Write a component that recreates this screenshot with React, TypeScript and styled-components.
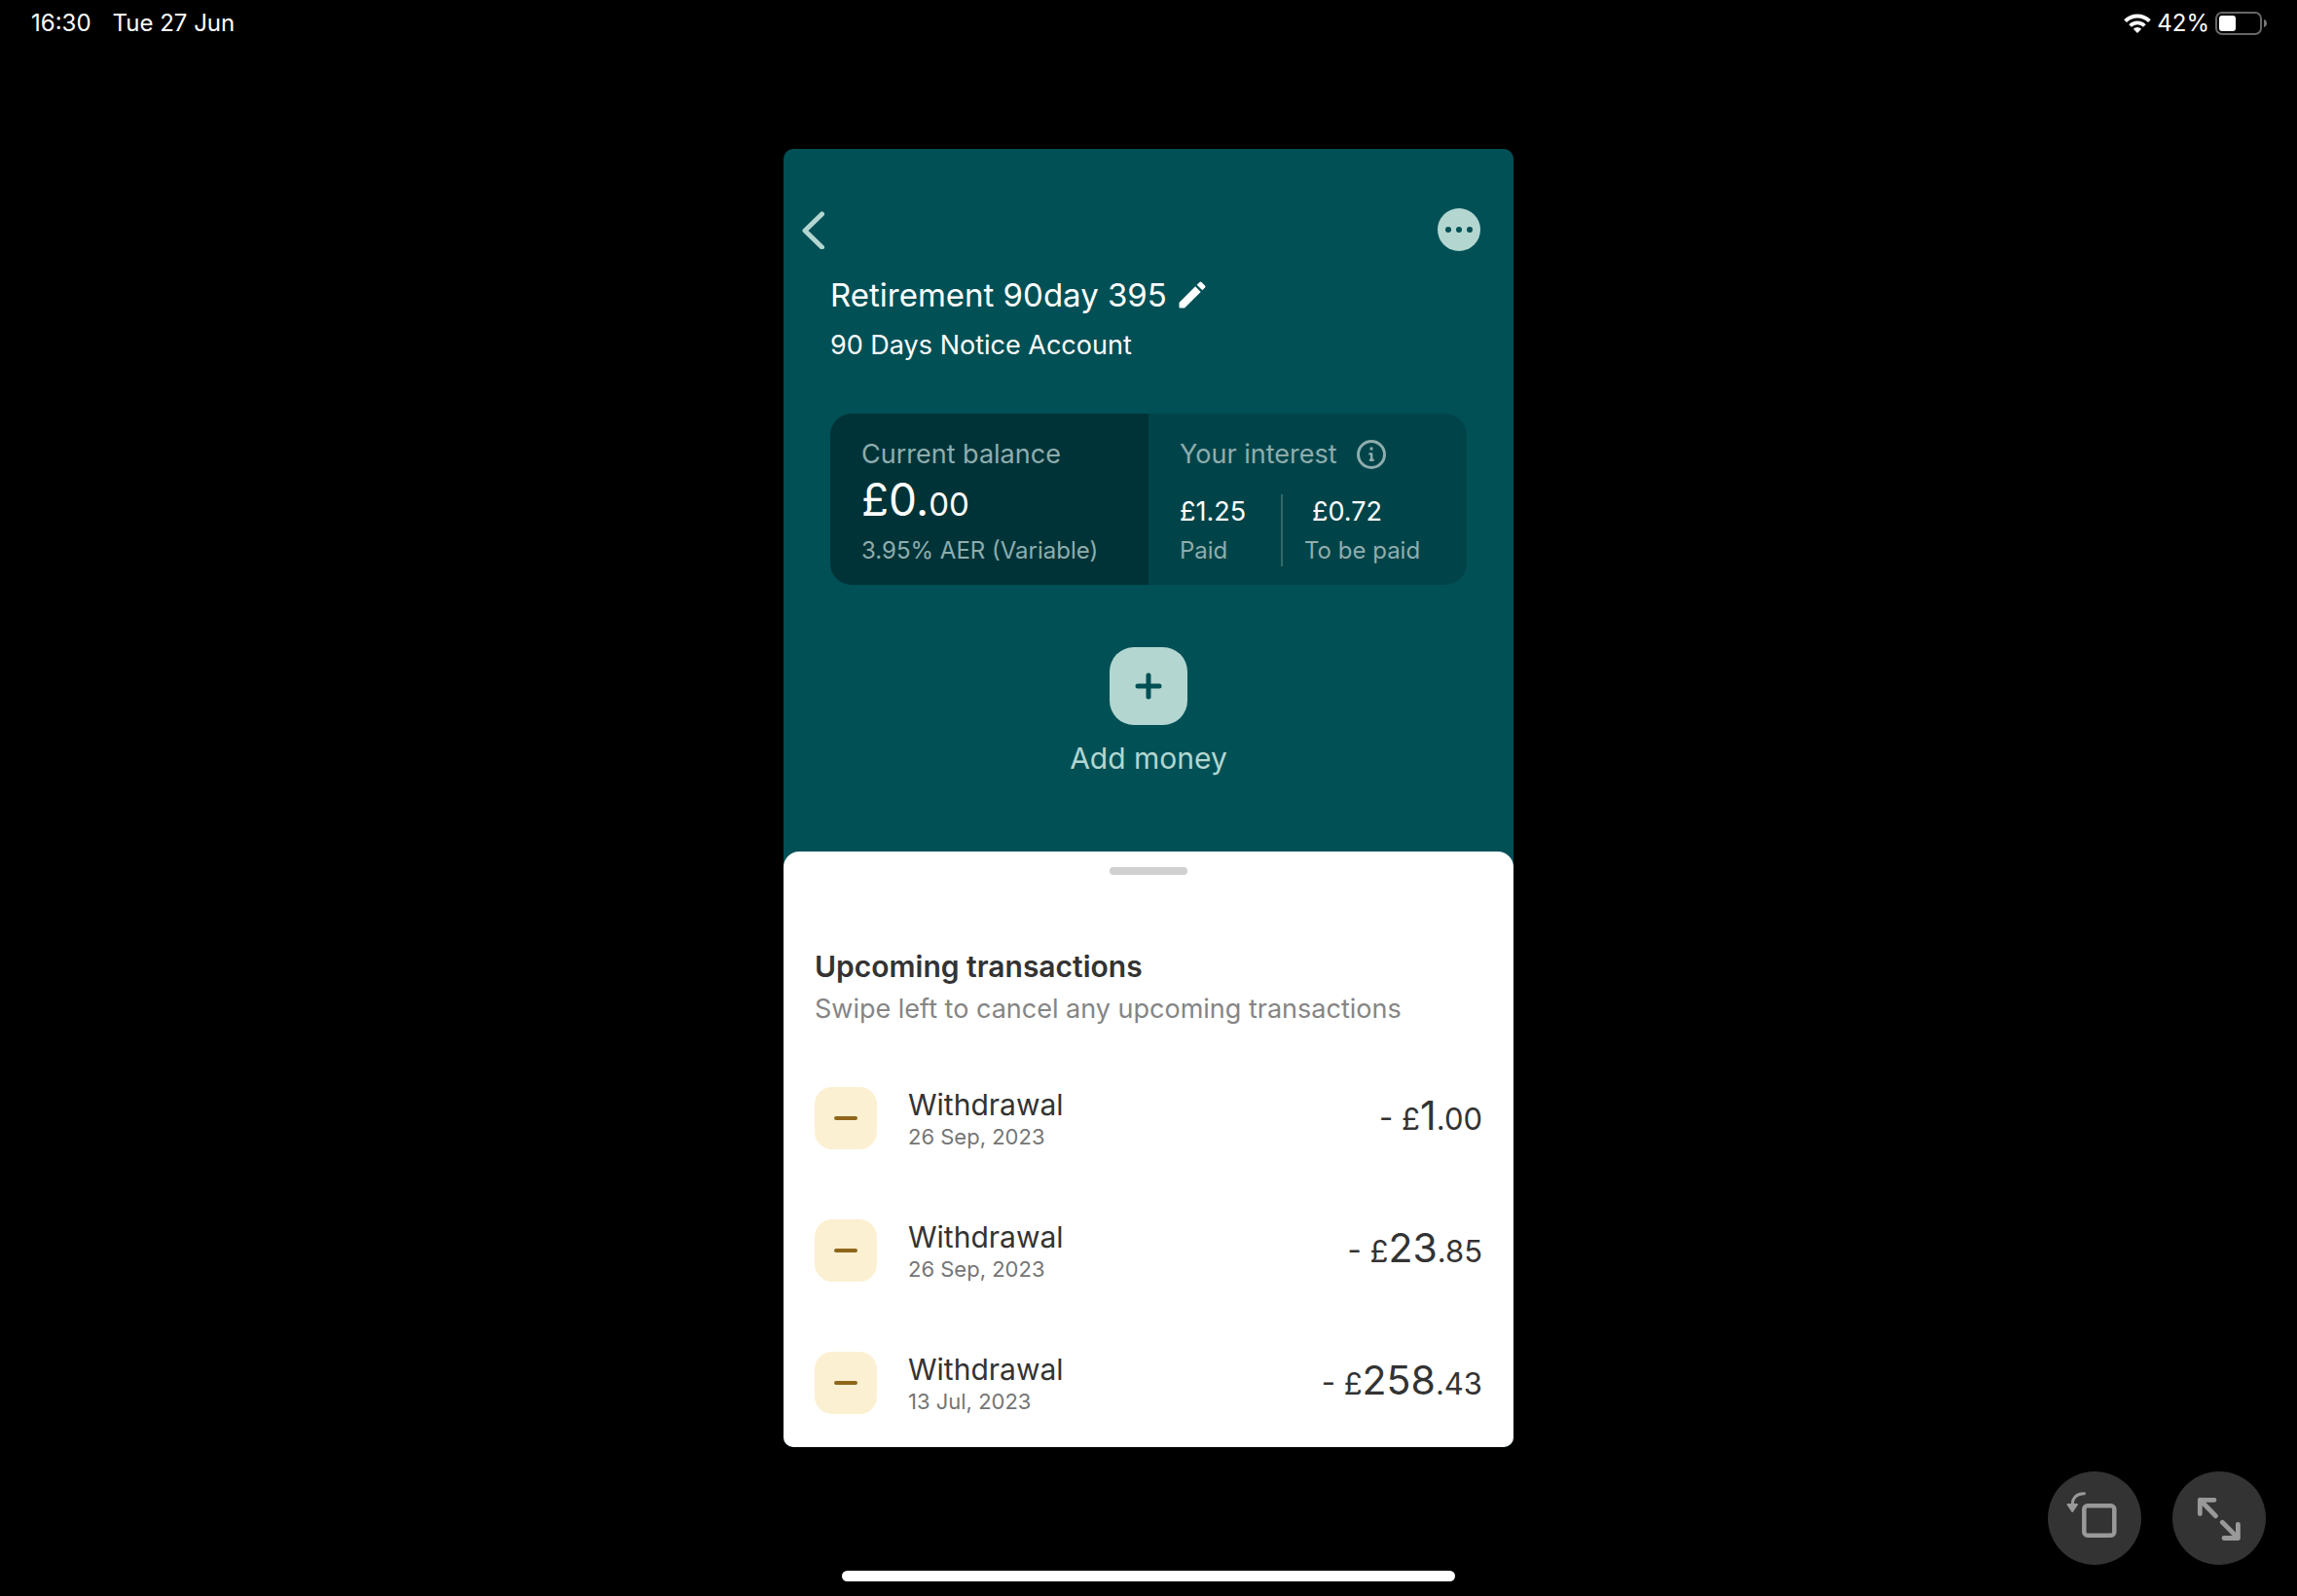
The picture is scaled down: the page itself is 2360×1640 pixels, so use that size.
import React from "react";
import styled, { createGlobalStyle } from "styled-components";

const teal = "#005056";
const mint = "#b3d6d0";
const muted = "#8fadae";
const ink = "#333333";

const GlobalStyle = createGlobalStyle`
  *, *::before, *::after { box-sizing: border-box; }
  body {
    margin: 0;
    background: #000;
    font-family: Inter, "Liberation Sans", sans-serif;
    font-weight: 400;
  }
  h1, h2, p, ul, dl, dd, dt { margin: 0; padding: 0; font-weight: 400; }
  ul { list-style: none; }
  button {
    border: 0;
    padding: 0;
    background: none;
    font: inherit;
    color: inherit;
    cursor: pointer;
  }
  svg { display: block; }
`;

const Page = styled.div`
  min-height: 100vh;
  display: flex;
  flex-direction: column;
  background: #000;
`;

const StatusBar = styled.header`
  display: flex;
  align-items: center;
  justify-content: space-between;
  height: 48px;
  padding: 0 30px 0 32px;
  color: #fff;
  font-size: 24px;
  line-height: 28px;
`;

const StatusGroup = styled.div<{ $gap: number }>`
  display: flex;
  align-items: center;
  gap: ${(p) => p.$gap}px;
`;

const Phone = styled.main`
  width: 100%;
  max-width: 750px;
  margin: 105px auto 25px;
  border-radius: 10px;
  overflow: hidden;
  background: ${teal};
`;

const TopBar = styled.nav`
  display: flex;
  align-items: center;
  justify-content: space-between;
  padding: 61px 34px 25px 14px;
`;

const MoreButton = styled.button`
  display: grid;
  place-items: center;
  width: 44px;
  height: 44px;
  border-radius: 50%;
  background: ${mint};
  color: ${teal};
`;

const AccountHeading = styled.section`
  display: flex;
  flex-direction: column;
  gap: 14px;
  padding: 0 48px 52px;
  color: #fff;
`;

const TitleLine = styled.div`
  display: flex;
  align-items: center;
  gap: 8px;
  height: 40px;
`;

const Title = styled.h1`
  font-size: 33px;
  line-height: 40px;
`;

const Subtitle = styled.p`
  font-size: 27px;
  line-height: 36px;
`;

const Summary = styled.section`
  display: grid;
  grid-template-columns: 1fr 1fr;
  margin: 0 48px 64px;
  border-radius: 22px;
  overflow: hidden;
  color: #fff;
`;

const SummaryPane = styled.div<{ $tone: string }>`
  padding: 24px 0 19px 32px;
  background: ${(p) => p.$tone};
`;

const PaneLabel = styled.h2`
  display: flex;
  align-items: center;
  gap: 20px;
  height: 36px;
  font-size: 27px;
  line-height: 36px;
  color: ${muted};
`;

const Balance = styled.p`
  margin: 2px 0 11px;
  font-size: 46px;
  line-height: 52px;
`;

const BalancePence = styled.span`
  font-size: 33px;
  line-height: 1;
`;

const Note = styled.p`
  font-size: 24px;
  line-height: 32px;
  color: ${muted};
`;

const InterestRow = styled.dl`
  display: flex;
  margin-top: 23px;
`;

const InterestCell = styled.div<{ $divided?: boolean }>`
  display: flex;
  flex-direction: column-reverse;
  gap: 6px;
  min-width: 104px;
  ${(p) =>
    p.$divided &&
    `border-left: 2px solid rgba(255, 255, 255, 0.2);
     padding-left: 22px;`}
`;

const InterestTerm = styled.dt`
  font-size: 24px;
  line-height: 32px;
  color: ${muted};
`;

const InterestValue = styled.dd<{ $indent?: boolean }>`
  && { padding-left: ${(p) => (p.$indent ? 8 : 0)}px; }
  font-size: 27px;
  line-height: 36px;
`;

const Actions = styled.div`
  display: flex;
  justify-content: center;
  padding-bottom: 76px;
`;

const AddButton = styled.button`
  display: flex;
  flex-direction: column;
  align-items: center;
  gap: 14px;
  font-size: 30px;
  line-height: 40px;
  color: ${mint};
`;

const AddTile = styled.span`
  display: grid;
  place-items: center;
  width: 80px;
  height: 80px;
  border-radius: 25px;
  background: ${mint};
  color: ${teal};
`;

const Sheet = styled.section`
  padding: 16px 32px 32px;
  border-radius: 16px 16px 0 0;
  background: #fff;
  color: ${ink};
`;

const Handle = styled.div`
  width: 80px;
  height: 8px;
  margin: 0 auto 76px;
  border-radius: 4px;
  background: #d0d0d0;
`;

const SheetTitle = styled.h2`
  && { font-weight: 600; }
  font-size: 30px;
  line-height: 36px;
`;

const SheetHint = styled.p`
  && { margin: 8px 0 62px; }
  font-size: 27px;
  line-height: 36px;
  color: #858585;
`;

const TransactionList = styled.ul`
  display: flex;
  flex-direction: column;
  gap: 70px;
`;

const TransactionRow = styled.li`
  display: flex;
  align-items: flex-start;
  gap: 32px;
`;

const TransactionTile = styled.span`
  display: grid;
  place-items: center;
  width: 64px;
  height: 64px;
  border-radius: 18px;
  background: #fcf0d2;
  color: #8f661a;
`;

const TransactionText = styled.div`
  flex: 1;
`;

const TransactionName = styled.p`
  font-size: 30px;
  line-height: 36px;
`;

const TransactionDate = styled.p`
  font-size: 22px;
  line-height: 30px;
  color: #757575;
`;

const Amount = styled.p`
  font-size: 31px;
  line-height: 66px;
  white-space: nowrap;
`;

const AmountPounds = styled.span`
  font-size: 41px;
  line-height: 1;
`;

const Footer = styled.footer`
  display: grid;
  grid-template-columns: 1fr minmax(0, 630px) 1fr;
  align-items: end;
  margin-top: auto;
`;

const HomeIndicator = styled.div`
  grid-column: 2;
  height: 11px;
  margin-bottom: 15px;
  border-radius: 6px;
  background: #fff;
`;

const WindowControls = styled.div`
  grid-column: 3;
  display: flex;
  justify-content: flex-end;
  gap: 32px;
  padding: 0 32px 32px 0;
`;

const RoundButton = styled.button`
  width: 96px;
  height: 96px;
  flex: none;
  border-radius: 50%;
  background: #333;
  color: #999;
`;

const WifiIcon = () => (
  <svg width="28" height="20" viewBox="0 0 28 20" fill="none" stroke="currentColor">
    <path d="M1.6 7.6a17.6 17.6 0 0 1 24.8 0" strokeWidth="4" />
    <path d="M6.6 12.5a10.5 10.5 0 0 1 14.8 0" strokeWidth="3.8" />
    <path d="M14 20l-4.2-4.3a6 6 0 0 1 8.4 0z" fill="currentColor" stroke="none" />
  </svg>
);

const BatteryIcon = () => (
  <svg width="54" height="24" viewBox="0 0 54 24" fill="none">
    <rect x="1" y="1" width="46" height="22" rx="6" stroke="#666" strokeWidth="2" />
    <rect x="4" y="4" width="17" height="16" rx="3" fill="#fff" />
    <path d="M50 8c2 .6 3 2.2 3 4s-1 3.4-3 4z" fill="#777" />
  </svg>
);

const BackIcon = () => (
  <svg width="28" height="40" viewBox="0 0 28 40" fill="none" stroke={mint} strokeWidth="5" strokeLinecap="round" strokeLinejoin="round">
    <path d="M25.5 4L8 21l17.500 17" />
  </svg>
);

const MoreIcon = () => (
  <svg width="28" height="6" viewBox="0 0 28 6" fill="currentColor">
    <circle cx="3" cy="3" r="3" />
    <circle cx="14" cy="3" r="3" />
    <circle cx="25" cy="3" r="3" />
  </svg>
);

const PencilIcon = () => (
  <svg width="36" height="36" viewBox="0 0 24 24" fill="currentColor">
    <path d="M3 17.460v3.040c0 .28.22.5.5.5h3.040c.13 0 .26-.05.35-.15L17.810 9.940l-3.750-3.750L3.150 17.100c-.1.1-.15.22-.15.36z" />
    <path d="M20.710 7.040a.996.996 0 0 0 0-1.410l-2.340-2.340a.996.996 0 0 0-1.410 0l-1.830 1.830 3.750 3.750 1.830-1.830z" />
  </svg>
);

const InfoIcon = () => (
  <svg width="30" height="30" viewBox="0 0 30 30" fill="none" stroke="currentColor" strokeLinecap="round" strokeLinejoin="round">
    <circle cx="15" cy="15" r="13.5" strokeWidth="3" />
    <circle cx="15" cy="9" r="1.7" fill="currentColor" stroke="none" />
    <path d="M13.4 14.4h1.800v5.400q0 .9.900.9h.6M13.900 20.700h1.500" strokeWidth="2.400" />
  </svg>
);

const PlusIcon = () => (
  <svg width="28" height="28" viewBox="0 0 28 28" fill="none" stroke="currentColor" strokeWidth="5" strokeLinecap="round">
    <path d="M14 3v22M3 14h22" />
  </svg>
);

const MinusIcon = () => (
  <svg width="24" height="4" viewBox="0 0 24 4" fill="none" stroke="currentColor" strokeWidth="4" strokeLinecap="round">
    <path d="M2 2h20" />
  </svg>
);

const RotateIcon = () => (
  <svg width="96" height="96" viewBox="0 0 96 96" fill="none" stroke="currentColor" strokeLinecap="round" strokeLinejoin="round">
    <rect x="37.3" y="35.3" width="31" height="30.5" rx="3.5" strokeWidth="4.500" />
    <path d="M37.500 22.800C30 22.600 25.300 27 25.300 34" strokeWidth="3" />
    <path d="M20.500 34h9.500l-4.800 7z" fill="currentColor" strokeWidth="2" />
  </svg>
);

const ExpandIcon = () => (
  <svg width="96" height="96" viewBox="0 0 96 96" fill="none" stroke="currentColor" strokeWidth="4.8" strokeLinecap="round" strokeLinejoin="round">
    <path d="M43 29.3H28.300V43.500M28.300 29.300L44.500 45.800" />
    <path d="M53 68.500H67.400V54.300M67.400 68.500L51.300 52.200" />
  </svg>
);

const transactions = [
  { date: "26 Sep, 2023", pounds: "1", pence: "00" },
  { date: "26 Sep, 2023", pounds: "23", pence: "85" },
  { date: "13 Jul, 2023", pounds: "258", pence: "43" },
];

export default function App() {
  return (
    <>
      <GlobalStyle />
      <Page>
        <StatusBar>
          <StatusGroup $gap={22}>
            <time>16:30</time>
            <span>Tue 27 Jun</span>
          </StatusGroup>
          <StatusGroup $gap={6}>
            <WifiIcon />
            <span>42%</span>
            <BatteryIcon />
          </StatusGroup>
        </StatusBar>

        <Phone>
          <TopBar>
            <button type="button" aria-label="Back">
              <BackIcon />
            </button>
            <MoreButton type="button" aria-label="More options">
              <MoreIcon />
            </MoreButton>
          </TopBar>

          <AccountHeading>
            <TitleLine>
              <Title>Retirement 90day 395</Title>
              <button type="button" aria-label="Rename account">
                <PencilIcon />
              </button>
            </TitleLine>
            <Subtitle>90 Days Notice Account</Subtitle>
          </AccountHeading>

          <Summary>
            <SummaryPane $tone="#003337">
              <PaneLabel>Current balance</PaneLabel>
              <Balance>
                £0.<BalancePence>00</BalancePence>
              </Balance>
              <Note>3.95% AER (Variable)</Note>
            </SummaryPane>
            <SummaryPane $tone="#004449">
              <PaneLabel>
                Your interest
                <button type="button" aria-label="About your interest">
                  <InfoIcon />
                </button>
              </PaneLabel>
              <InterestRow>
                <InterestCell>
                  <InterestTerm>Paid</InterestTerm>
                  <InterestValue>£1.25</InterestValue>
                </InterestCell>
                <InterestCell $divided>
                  <InterestTerm>To be paid</InterestTerm>
                  <InterestValue $indent>£0.72</InterestValue>
                </InterestCell>
              </InterestRow>
            </SummaryPane>
          </Summary>

          <Actions>
            <AddButton type="button">
              <AddTile>
                <PlusIcon />
              </AddTile>
              Add money
            </AddButton>
          </Actions>

          <Sheet>
            <Handle />
            <SheetTitle>Upcoming transactions</SheetTitle>
            <SheetHint>Swipe left to cancel any upcoming transactions</SheetHint>
            <TransactionList>
              {transactions.map((t) => (
                <TransactionRow key={t.pounds}>
                  <TransactionTile>
                    <MinusIcon />
                  </TransactionTile>
                  <TransactionText>
                    <TransactionName>Withdrawal</TransactionName>
                    <TransactionDate>{t.date}</TransactionDate>
                  </TransactionText>
                  <Amount>
                    - £<AmountPounds>{t.pounds}</AmountPounds>.{t.pence}
                  </Amount>
                </TransactionRow>
              ))}
            </TransactionList>
          </Sheet>
        </Phone>

        <Footer>
          <HomeIndicator />
          <WindowControls>
            <RoundButton type="button" aria-label="Rotate window">
              <RotateIcon />
            </RoundButton>
            <RoundButton type="button" aria-label="Expand window">
              <ExpandIcon />
            </RoundButton>
          </WindowControls>
        </Footer>
      </Page>
    </>
  );
}
